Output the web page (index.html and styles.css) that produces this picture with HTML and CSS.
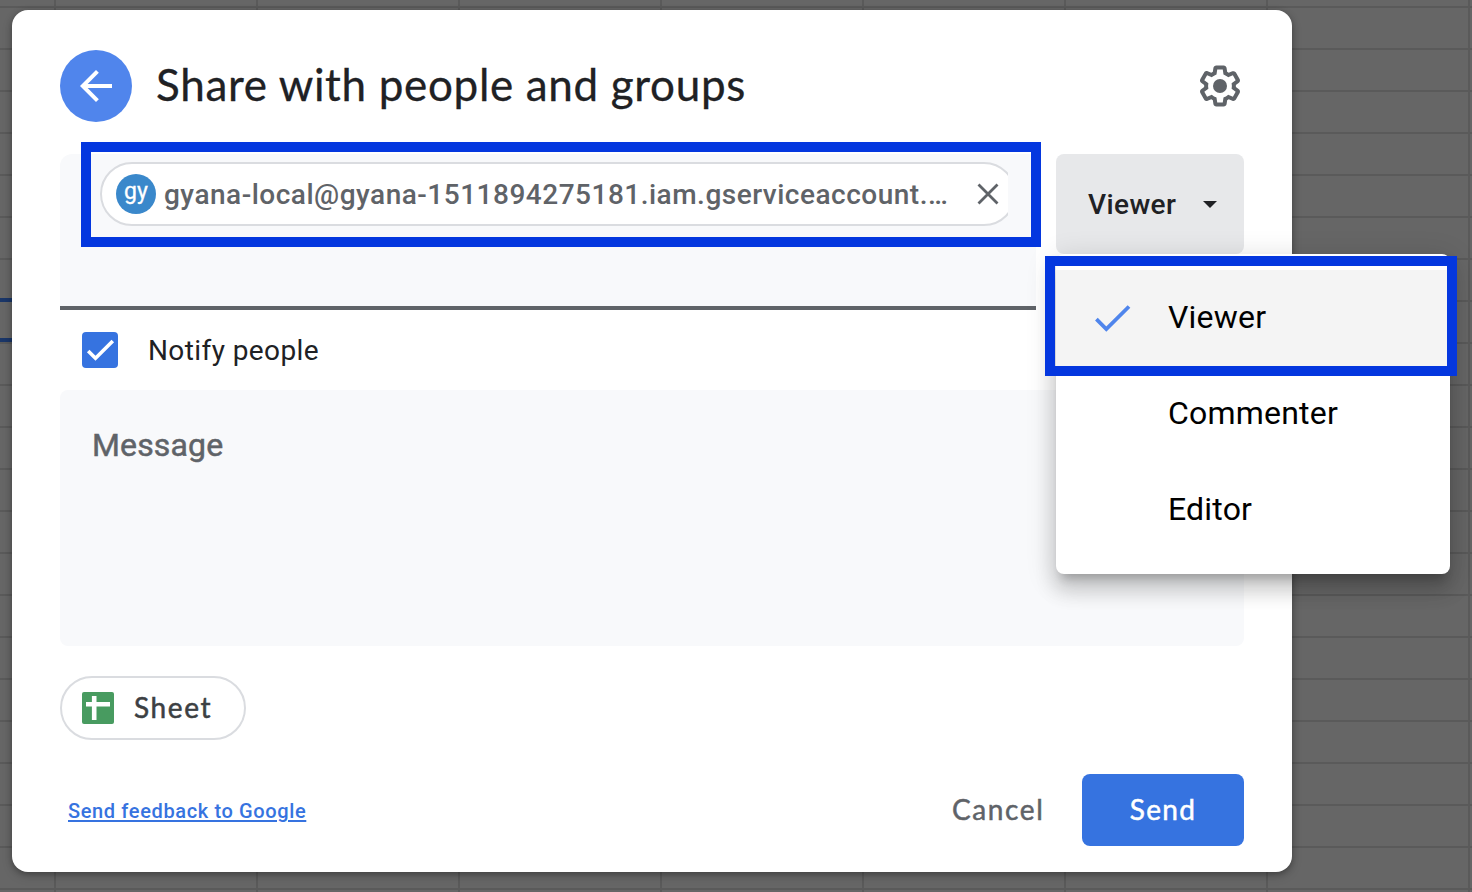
FILE: index.html
```html
<!DOCTYPE html>
<html lang="en">
<head>
<meta charset="utf-8">
<title>Share with people and groups</title>
<link rel="stylesheet" href="styles.css">
</head>
<body>
<div class="cell-selection"></div>
<main class="dialog">
  <header class="header">
    <button class="back" aria-label="Back">
      <svg width="48" height="48" viewBox="0 0 24 24"><path fill="#fff" d="M20 11H7.83l5.59-5.59L12 4l-8 8 8 8 1.41-1.41L7.83 13H20v-2z"/></svg>
    </button>
    <h1 class="title"><span>Share with people and groups</span></h1>
    <svg class="gear" width="48" height="48" viewBox="0 0 24 24"><path fill="#5f6368" d="M13.85 22.25h-3.7c-.74 0-1.36-.54-1.45-1.27l-.27-1.89c-.27-.14-.53-.29-.79-.46l-1.8.72c-.7.26-1.47-.03-1.81-.65L2.2 15.53c-.35-.66-.2-1.44.36-1.88l1.53-1.19c-.01-.15-.02-.3-.02-.46 0-.15.01-.31.02-.46l-1.52-1.19c-.59-.45-.74-1.26-.37-1.88l1.85-3.19c.34-.62 1.11-.9 1.79-.63l1.81.73c.26-.17.52-.32.78-.46l.27-1.91c.09-.7.71-1.25 1.44-1.25h3.7c.74 0 1.36.54 1.45 1.27l.27 1.89c.27.14.53.29.79.46l1.8-.72c.71-.26 1.48.03 1.82.65l1.84 3.18c.36.66.2 1.44-.36 1.88l-1.52 1.19c.01.15.02.3.02.46s-.01.31-.02.46l1.52 1.19c.56.45.72 1.23.37 1.86l-1.86 3.22c-.34.62-1.11.9-1.8.63l-1.8-.72c-.26.17-.52.32-.78.46l-.27 1.91c-.1.68-.72 1.22-1.46 1.22zm-3.23-2h2.76l.37-2.55.53-.22c.44-.18.88-.44 1.34-.78l.45-.34 2.38.96 1.38-2.4-2.03-1.58.07-.56c.03-.26.06-.51.06-.78s-.03-.53-.06-.78l-.07-.56 2.03-1.58-1.39-2.4-2.39.96-.45-.35c-.42-.32-.87-.58-1.33-.77l-.52-.22-.37-2.55h-2.76l-.37 2.55-.53.21c-.44.19-.88.44-1.34.79l-.45.33-2.38-.95-1.39 2.39 2.03 1.58-.07.56a7 7 0 0 0-.06.79c0 .26.02.53.06.78l.07.56-2.03 1.58 1.38 2.4 2.39-.96.45.35c.43.33.86.58 1.33.77l.53.22.38 2.55z"/><circle cx="12" cy="12" r="3.5" fill="#5f6368"/></svg>
  </header>

  <section class="recipients">
    <div class="people-field">
      <div class="chip-clip">
        <div class="person-chip">
          <span class="avatar">gy</span>
          <span class="email">gyana-local@gyana-1511894275181.iam.gserviceaccount.…</span>
          <svg class="remove" width="24" height="24" viewBox="0 0 24 24"><path d="M2.5 2.5l19 19M21.5 2.5l-19 19" stroke="#5f6368" stroke-width="2.8"/></svg>
        </div>
      </div>
      <div class="outline outline-person"></div>
    </div>
    <div class="role">
      <button class="role-button"><span>Viewer</span><i class="caret"></i></button>
      <div class="menu">
        <div class="option selected">
          <svg width="36" height="28" viewBox="0 0 36 28"><path d="M1.4 15.2l9.9 9.8L34 2.5" fill="none" stroke="#4f85ec" stroke-width="3.8"/></svg>
          <span>Viewer</span>
        </div>
        <div class="option"><span>Commenter</span></div>
        <div class="option"><span>Editor</span></div>
        <div class="outline outline-option"></div>
      </div>
    </div>
  </section>

  <label class="notify">
    <svg width="36" height="36" viewBox="0 0 36 36"><rect width="36" height="36" rx="4" fill="#3673e0"/><path d="M6.2 19l7.3 7.3L30.8 9" fill="none" stroke="#fff" stroke-width="3.6"/></svg>
    <span>Notify people</span>
  </label>
  <div class="message"><span>Message</span></div>
  <div class="file-chip">
    <svg width="32" height="32" viewBox="0 0 32 32"><rect width="32" height="32" rx="2" fill="#489b60"/><path d="M12.2 4v24M4 12.2h24" stroke="#fff" stroke-width="4.6"/></svg>
    <span>Sheet</span>
  </div>
  <footer class="footer">
    <a class="feedback">Send feedback to Google</a>
    <button class="cancel">Cancel</button>
    <button class="send">Send</button>
  </footer>
</main>
</body>
</html>
```
FILE: styles.css
```css
* { box-sizing: border-box; }
body {
  margin: 0;
  height: 892px;
  overflow: hidden;
  padding: 10px 12px;
  font-family: Roboto, "Liberation Sans", sans-serif;
  background-color: #666;
  background-image:
    repeating-linear-gradient(to right, transparent 0 54px, #5a5a5a 54px 56px, transparent 56px 202px),
    repeating-linear-gradient(to bottom, transparent 0 6px, #5a5a5a 6px 8px, transparent 8px 42px);
}
button { border: 0; padding: 0; background: none; font: inherit; }
svg { display: block; flex: none; }
.cell-selection {
  position: absolute;
  left: 0; top: 298px;
  width: 12px; height: 44px;
  border: solid #1a3668;
  border-width: 4px 0;
}
.dialog {
  position: relative;
  width: 1280px;
  height: 862px;
  padding: 40px 48px 26px;
  border-radius: 16px;
  background: #fff;
  box-shadow: 0 2px 6px rgba(0,0,0,.3), 0 4px 12px rgba(0,0,0,.12);
}
.header { display: flex; align-items: center; height: 72px; }
.back {
  display: flex; align-items: center; justify-content: center;
  width: 72px; height: 72px;
  border-radius: 50%;
  background: #5085ec;
}
.title {
  flex: 1;
  margin: 0 0 4px 24px;
  font: 400 44px/56px Lato, sans-serif;
  letter-spacing: .67px;
  color: #202124;
  -webkit-text-stroke: .3px #202124;
  white-space: nowrap;
}
.recipients { display: flex; align-items: flex-start; gap: 20px; margin-top: 32px; }
.people-field {
  position: relative;
  width: 976px; height: 156px;
  padding: 8px 28px 0 40px;
  border-bottom: 4px solid #5f6368;
  border-radius: 12px 0 0 0;
  background: #f8f9fb;
}
.chip-clip { overflow: hidden; }
.person-chip {
  display: flex; align-items: center;
  width: 916px; height: 64px;
  padding-left: 14px;
  border: 2px solid #dadce0;
  border-radius: 32px;
  background: #fff;
}
.avatar {
  width: 40px; height: 40px;
  border-radius: 50%;
  background: #3a88cb;
  color: #fff;
  font-size: 23px; line-height: 35px; font-weight: 400;
  -webkit-text-stroke: .3px #fff;
  text-align: center;
}
.email {
  width: 812px;
  margin: 2px 0 0 8px;
  font-size: 28px; line-height: 40px; font-weight: 500;
  letter-spacing: .5px;
  color: #5f6368;
  white-space: nowrap;
}
.outline { position: absolute; border: 10px solid #0437df; }
.outline-person { left: 21px; top: -12px; width: 960px; height: 105px; }
.outline-option { left: -11px; top: 2px; width: 412px; height: 120px; }
.role { position: relative; width: 188px; }
.role-button {
  display: flex; align-items: center;
  width: 188px; height: 100px;
  padding-left: 32px;
  border-radius: 8px;
  background: #e7e8ea;
  color: #202124;
  font-size: 28px; font-weight: 500; letter-spacing: .4px;
}
.role-button span { width: 115px; text-align: left; }
.caret { border: 7.5px solid transparent; border-top-color: #202124; border-bottom: 0; }
.menu {
  position: absolute;
  left: 0; top: 100px;
  width: 394px; height: 320px;
  padding-top: 16px;
  border-radius: 8px;
  background: #fff;
  box-shadow: 0 10px 10px -6px rgba(0,0,0,.2), 0 16px 20px 2px rgba(0,0,0,.14), 0 6px 28px 4px rgba(0,0,0,.12);
}
.option {
  display: flex; align-items: center;
  height: 96px;
  padding-left: 112px;
  color: #000;
  font-size: 32px; letter-spacing: .2px;
}
.option span { margin-bottom: 2px; }
.selected { padding-left: 39px; gap: 37px; background: #f4f4f4; }
.notify {
  display: flex; align-items: center; gap: 30px;
  width: 300px;
  margin: 22px 0 0 22px;
  font-size: 28px; letter-spacing: .4px;
  color: #202124;
}
.message {
  height: 256px;
  margin-top: 22px;
  padding: 35px 32px;
  border-radius: 8px;
  background: #f8f9fb;
  color: #5f6368;
  font-size: 32px; line-height: 40px;
  letter-spacing: .15px;
  -webkit-text-stroke: .5px #5f6368;
}
.file-chip {
  display: flex; align-items: center; gap: 20px;
  width: 186px; height: 64px;
  margin-top: 30px;
  padding-left: 20px;
  border: 2px solid #dadce0;
  border-radius: 32px;
  color: #3c4043;
  font: 400 28px Lato, sans-serif;
  letter-spacing: 1.6px;
  -webkit-text-stroke: .5px #3c4043;
}
.file-chip span { margin-bottom: 2px; }
.footer { display: flex; align-items: center; height: 72px; margin-top: 34px; }
.feedback {
  margin: 2px auto 0 8px;
  color: #3673e0;
  font-size: 20px; font-weight: 500; letter-spacing: .63px;
  text-decoration: underline;
  text-decoration-thickness: 2px;
  text-underline-offset: 2px;
}
.cancel, .send { padding-bottom: 2px; font: 400 28px Lato, sans-serif; }
.cancel { width: 92px; margin-right: 38px; color: #5f6368; letter-spacing: 1.6px; -webkit-text-stroke: .5px #5f6368; white-space: nowrap; text-align: left; }
.send { width: 162px; height: 72px; border-radius: 8px; background: #3673e0; color: #fff; letter-spacing: 1.3px; -webkit-text-stroke: .5px #fff; }
```
